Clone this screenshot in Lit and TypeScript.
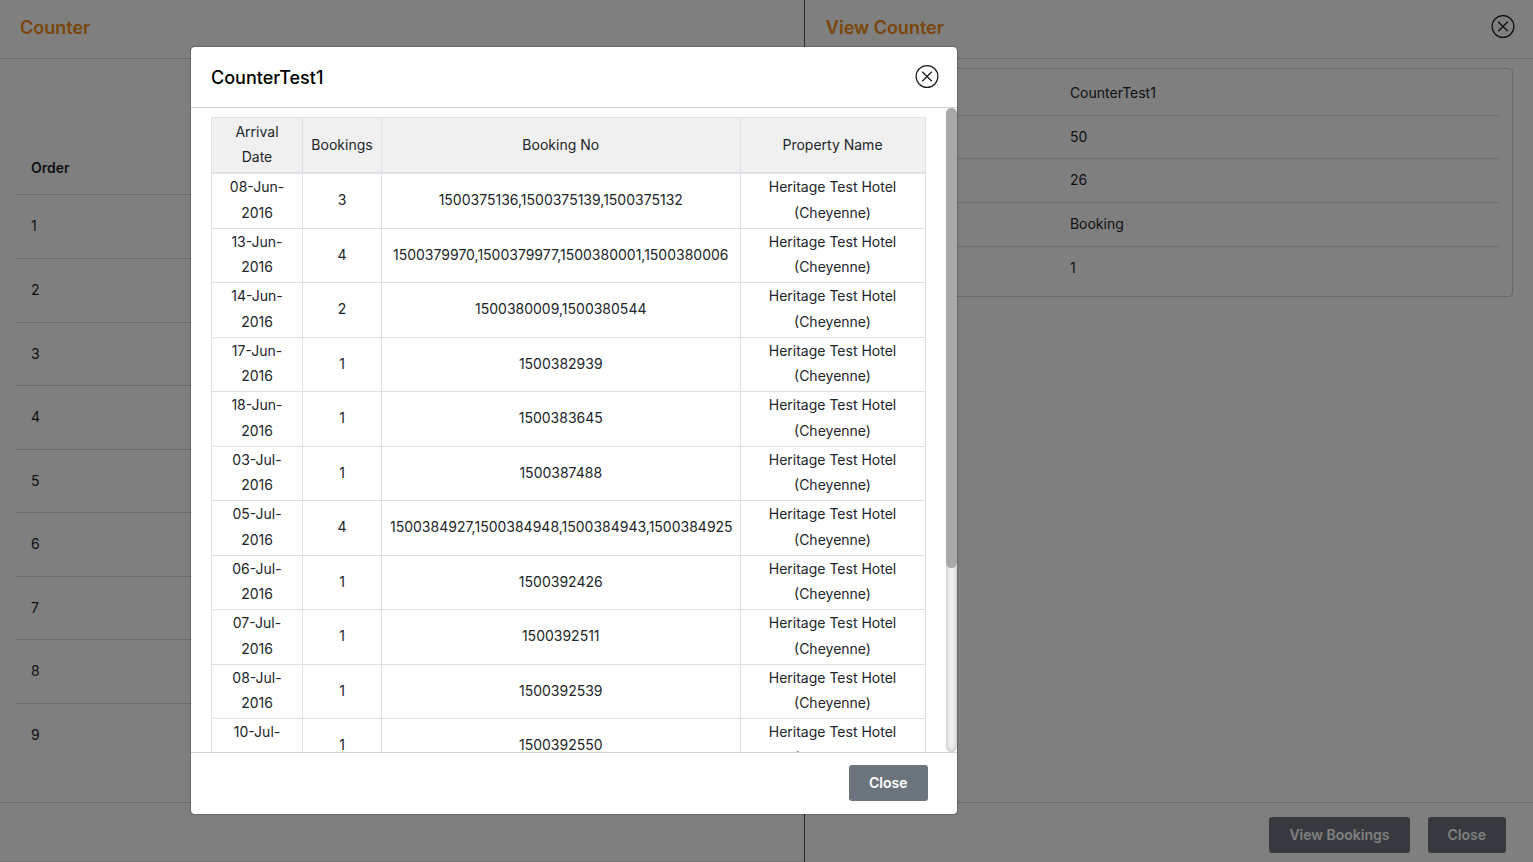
import { LitElement, html, css, svg } from "lit";
import { customElement, property } from "lit/decorators.js";

interface BookingRow {
  date: string;
  count: number;
  numbers: string;
}

const PROPERTY_NAME = "Heritage Test Hotel (Cheyenne)";

const BOOKINGS: BookingRow[] = [
  { date: "08-Jun-2016", count: 3, numbers: "1500375136,1500375139,1500375132" },
  { date: "13-Jun-2016", count: 4, numbers: "1500379970,1500379977,1500380001,1500380006" },
  { date: "14-Jun-2016", count: 2, numbers: "1500380009,1500380544" },
  { date: "17-Jun-2016", count: 1, numbers: "1500382939" },
  { date: "18-Jun-2016", count: 1, numbers: "1500383645" },
  { date: "03-Jul-2016", count: 1, numbers: "1500387488" },
  { date: "05-Jul-2016", count: 4, numbers: "1500384927,1500384948,1500384943,1500384925" },
  { date: "06-Jul-2016", count: 1, numbers: "1500392426" },
  { date: "07-Jul-2016", count: 1, numbers: "1500392511" },
  { date: "08-Jul-2016", count: 1, numbers: "1500392539" },
  { date: "10-Jul-2016", count: 1, numbers: "1500392550" },
];

const DETAILS = ["CounterTest1", "50", "26", "Booking", "1"];
const ORDERS = [1, 2, 3, 4, 5, 6, 7, 8, 9];

const baseStyles = css`
  * {
    box-sizing: border-box;
  }
  .action {
    height: 36px;
    padding: 0 20px;
    border: 0;
    border-radius: 3px;
    background: #6c757d;
    color: #fff;
    font: 600 14px/34px Inter, sans-serif;
  }
`;

@customElement("close-icon-button")
export class CloseIconButton extends LitElement {
  @property() label = "Close";

  static styles = css`
    :host {
      display: block;
      height: 24px;
    }
    .icon {
      display: block;
      width: 24px;
      height: 24px;
      padding: 0;
      border: 0;
      background: none;
      color: #1c1c1c;
    }
    svg {
      display: block;
    }
  `;

  render() {
    return html`<button class="icon" type="button" aria-label=${this.label}>
      <svg width="24" height="24" viewBox="0 0 24 24" fill="none" stroke="currentColor">
        ${svg`<circle cx="12" cy="11.5" r="10.9" stroke-width="1.2" />
        <path d="M7.2 6.7l9.6 9.6M16.8 6.7l-9.6 9.6" stroke-width="1.3" />`}
      </svg>
    </button>`;
  }
}

@customElement("counter-list")
export class CounterList extends LitElement {
  static styles = [
    baseStyles,
    css`
      :host {
        display: flex;
        flex-direction: column;
        height: 100%;
      }
      .head {
        height: 59px;
        padding: 0 20px;
        border-bottom: 1px solid #d4d4d4;
      }
      .title {
        margin: 0;
        font: 600 18px/55px Inter, sans-serif;
        color: #f98b10;
      }
      .content {
        flex: 1;
        padding: 84px 17px 0;
      }
      .orders {
        width: 100%;
        border-collapse: collapse;
        text-align: left;
      }
      .orders th {
        height: 51px;
        padding: 0 14px;
        font-weight: 600;
        border-bottom: 1px solid #d4d4d4;
      }
      .orders td {
        height: 64px;
        padding: 0 14px;
      }
      .orders tr:nth-child(2n + 3) td {
        height: 63px;
      }
      .orders tr + tr td {
        border-top: 1px solid #d4d4d4;
      }
      .foot {
        height: 60px;
        border-top: 1px solid #d4d4d4;
        border-bottom: 1px solid #ececec;
      }
    `,
  ];

  render() {
    return html`
      <header class="head"><h1 class="title">Counter</h1></header>
      <div class="content">
        <table class="orders">
          <thead>
            <tr><th>Order</th></tr>
          </thead>
          <tbody>
            ${ORDERS.map((n) => html`<tr><td>${n}</td></tr>`)}
          </tbody>
        </table>
      </div>
      <footer class="foot"></footer>
    `;
  }
}

@customElement("counter-details")
export class CounterDetails extends LitElement {
  static styles = [
    baseStyles,
    css`
      :host {
        display: flex;
        flex-direction: column;
        height: 100%;
        background: #fff;
      }
      .head {
        display: flex;
        justify-content: space-between;
        height: 59px;
        padding: 0 18px 0 21px;
        border-bottom: 1px solid #d4d4d4;
      }
      .title {
        margin: 0;
        font: 600 18px/55px Inter, sans-serif;
        color: #f98b10;
      }
      close-icon-button {
        margin-top: 15px;
      }
      .content {
        flex: 1;
        padding: 9px 20px;
      }
      .card {
        padding: 2px 13px 6px;
        border: 1px solid #cfcfcf;
        border-radius: 4px;
      }
      .list {
        margin: 0;
      }
      .entry {
        display: grid;
        grid-template-columns: 35% 1fr;
        height: 44px;
        line-height: 43px;
      }
      .entry + .entry {
        border-top: 1px solid #dedede;
        line-height: 42px;
      }
      .entry:nth-child(2) {
        height: 43px;
      }
      .entry dd {
        margin: 0;
      }
      .foot {
        display: flex;
        justify-content: flex-end;
        gap: 18px;
        height: 60px;
        padding: 14px 27px 0;
        border-top: 1px solid #d4d4d4;
      }
    `,
  ];

  render() {
    return html`
      <header class="head">
        <h2 class="title">View Counter</h2>
        <close-icon-button></close-icon-button>
      </header>
      <div class="content">
        <div class="card">
          <dl class="list">
            ${DETAILS.map((value) => html`<div class="entry"><dt></dt><dd>${value}</dd></div>`)}
          </dl>
        </div>
      </div>
      <footer class="foot">
        <button class="action" type="button">View Bookings</button>
        <button class="action" type="button">Close</button>
      </footer>
    `;
  }
}

@customElement("bookings-dialog")
export class BookingsDialog extends LitElement {
  static styles = [
    baseStyles,
    css`
      :host {
        display: flex;
        flex-direction: column;
        overflow: hidden;
        background: #fff;
        border-radius: 4px;
        box-shadow: 0 0 2px rgba(0, 0, 0, 0.6);
      }
      .head {
        display: flex;
        justify-content: space-between;
        align-items: center;
        height: 61px;
        padding: 0 18px 0 20px;
        border-bottom: 1px solid #d4d4d4;
      }
      .title {
        margin: 0;
        padding-top: 2px;
        font: 500 18px/26px Inter, sans-serif;
        color: #000;
      }
      .body {
        flex: 1;
        min-height: 0;
        display: flex;
      }
      .scroller {
        flex: 1;
        overflow: hidden;
        padding: 9px 20px 0;
      }
      .track {
        width: 11px;
        border-radius: 6px;
        background: #f0f0f0;
        box-shadow: inset 0 0 5px rgba(0, 0, 0, 0.25);
      }
      .thumb {
        height: 71.5%;
        border-radius: 6px;
        background: #a8a8a8;
      }
      .bookings {
        width: 100%;
        table-layout: fixed;
        border-collapse: collapse;
        text-align: center;
      }
      .date {
        width: 91px;
      }
      .count {
        width: 79px;
      }
      .property {
        width: 185px;
      }
      .bookings th,
      .bookings td {
        padding: 0 8px 2px;
        border: 1px solid #dee2e6;
        font-weight: 400;
        line-height: 26px;
        vertical-align: middle;
      }
      .bookings th {
        padding: 1px 8px 3px;
        line-height: 25px;
        background: #f0f0f0;
        border-bottom-width: 2px;
      }
      .bookings tbody tr:nth-child(even) td {
        padding: 0 8px 3px;
        line-height: 25px;
      }
      .foot {
        display: flex;
        justify-content: flex-end;
        height: 62px;
        padding: 12px 29px 0;
        border-top: 1px solid #ced4da;
      }
    `,
  ];

  render() {
    return html`
      <header class="head">
        <h2 class="title">CounterTest1</h2>
        <close-icon-button></close-icon-button>
      </header>
      <div class="body">
        <div class="scroller">
          <table class="bookings">
            <colgroup>
              <col class="date" />
              <col class="count" />
              <col />
              <col class="property" />
            </colgroup>
            <thead>
              <tr>
                <th>Arrival Date</th>
                <th>Bookings</th>
                <th>Booking No</th>
                <th>Property Name</th>
              </tr>
            </thead>
            <tbody>
              ${BOOKINGS.map(
                (row) => html`<tr>
                  <td>${row.date}</td>
                  <td>${row.count}</td>
                  <td>${row.numbers}</td>
                  <td>${PROPERTY_NAME}</td>
                </tr>`
              )}
            </tbody>
          </table>
        </div>
        <div class="track"><div class="thumb"></div></div>
      </div>
      <footer class="foot">
        <button class="action" type="button">Close</button>
      </footer>
    `;
  }
}

@customElement("app-root")
export class AppRoot extends LitElement {
  static styles = css`
    :host {
      display: block;
      position: relative;
      height: 100vh;
      overflow: hidden;
      background: #fff;
      color: #212529;
      font: 400 14px/24px Inter, sans-serif;
    }
    .side {
      position: absolute;
      inset: 0 0 0 auto;
      width: 47.5%;
      border-left: 1px solid #555;
    }
    .overlay {
      position: absolute;
      inset: 0;
      padding: 47px 0 48px 191px;
      background: rgba(0, 0, 0, 0.5);
    }
    .dialog {
      width: calc(50vw - 1px);
      height: 100%;
    }
  `;

  render() {
    return html`
      <counter-list></counter-list>
      <aside class="side"><counter-details></counter-details></aside>
      <div class="overlay">
        <bookings-dialog class="dialog" role="dialog" aria-label="CounterTest1"></bookings-dialog>
      </div>
    `;
  }
}
